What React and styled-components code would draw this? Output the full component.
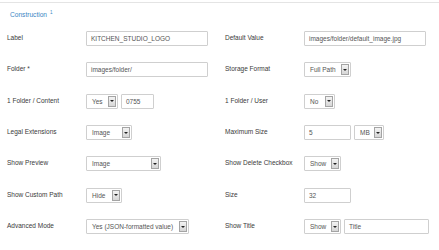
import React from 'react';
import styled, { createGlobalStyle } from 'styled-components';

const Global = createGlobalStyle`
  html, body { margin: 0; padding: 0; background: #fff; }
  body { font-family: "Liberation Sans", Arial, Helvetica, sans-serif; }
  * { box-sizing: border-box; }
`;

const Page = styled.div`
  width: 439px;
  height: 250px;
  overflow: hidden;
  background: #fff;
  padding-top: 2px;
`;

const Fieldset = styled.section`
  border-top: 1px solid #e4e4e4;
`;

const Legend = styled.div`
  padding: 7px 0 0 10px;
  height: 20px;
  line-height: 10px;
  font-size: 6.6px;
  color: #3a87c4;
`;

const Sup = styled.sup`
  font-size: 4.6px;
  line-height: 0;
  vertical-align: 3px;
  margin-left: 3px;
`;

const Grid = styled.div`
  display: grid;
  grid-template-columns: 218px 214px;
  grid-auto-rows: 31.33px;
  padding-left: 7px;
`;

const Field = styled.div`
  display: flex;
  align-items: center;
  gap: 3px;
`;

const Label = styled.div`
  width: 73px;
  margin-right: 3px;
  font-size: 6.5px;
  color: #3a3a3a;
  margin-top: -2px;
  white-space: nowrap;
`;

const TextInput = styled.div`
  width: ${p => p.$w}px;
  height: 15px;
  border: 1px solid #cfcfcf;
  border-radius: 1px;
  padding: 0 4px;
  display: flex;
  align-items: center;
  font-size: 6.5px;
  color: #555;
  background: #fff;
  white-space: nowrap;
  overflow: hidden;
`;

const SelectBox = styled.div`
  width: ${p => p.$w}px;
  height: 15px;
  border: 1px solid #cfcfcf;
  border-radius: 1px;
  display: flex;
  align-items: center;
  justify-content: space-between;
  padding-left: 5px;
  font-size: 6.5px;
  color: #555;
  background: #fff;
  white-space: nowrap;
`;

const ArrowBtn = styled.span`
  width: 8px;
  height: 11px;
  margin-right: 1px;
  border: 1px solid #a4a4a4;
  background: linear-gradient(#f3f3f3, #d6d6d6);
  display: flex;
  align-items: center;
  justify-content: center;
  &::after {
    content: '';
    border-left: 2px solid transparent;
    border-right: 2px solid transparent;
    border-top: 2px solid #222;
  }
`;

const Select = ({ w, children }) => (
  <SelectBox $w={w}>
    <span>{children}</span>
    <ArrowBtn />
  </SelectBox>
);

const Row = ({ label, children }) => (
  <Field>
    <Label>{label}</Label>
    {children}
  </Field>
);

export default function App() {
  return (
    <Page>
      <Global />
      <Fieldset>
        <Legend>
          Construction<Sup>1</Sup>
        </Legend>
        <Grid>
          <Row label="Label"><TextInput $w={122}>KITCHEN_STUDIO_LOGO</TextInput></Row>
          <Row label="Default Value"><TextInput $w={122}>images/folder/default_image.jpg</TextInput></Row>

          <Row label="Folder *"><TextInput $w={122}>images/folder/</TextInput></Row>
          <Row label="Storage Format"><Select w={47}>Full Path</Select></Row>

          <Row label="1 Folder / Content">
            <Select w={32}>Yes</Select>
            <TextInput $w={33}>0755</TextInput>
          </Row>
          <Row label="1 Folder / User"><Select w={31}>No</Select></Row>

          <Row label="Legal Extensions"><Select w={46}>Image</Select></Row>
          <Row label="Maximum Size">
            <TextInput $w={47}>5</TextInput>
            <Select w={30}>MB</Select>
          </Row>

          <Row label="Show Preview"><Select w={75}>Image</Select></Row>
          <Row label="Show Delete Checkbox"><Select w={37}>Show</Select></Row>

          <Row label="Show Custom Path"><Select w={36}>Hide</Select></Row>
          <Row label="Size"><TextInput $w={47}>32</TextInput></Row>

          <Row label="Advanced Mode"><Select w={103}>Yes (JSON-formatted value)</Select></Row>
          <Row label="Show Title">
            <Select w={37}>Show</Select>
            <TextInput $w={85}>Title</TextInput>
          </Row>
        </Grid>
      </Fieldset>
    </Page>
  );
}
